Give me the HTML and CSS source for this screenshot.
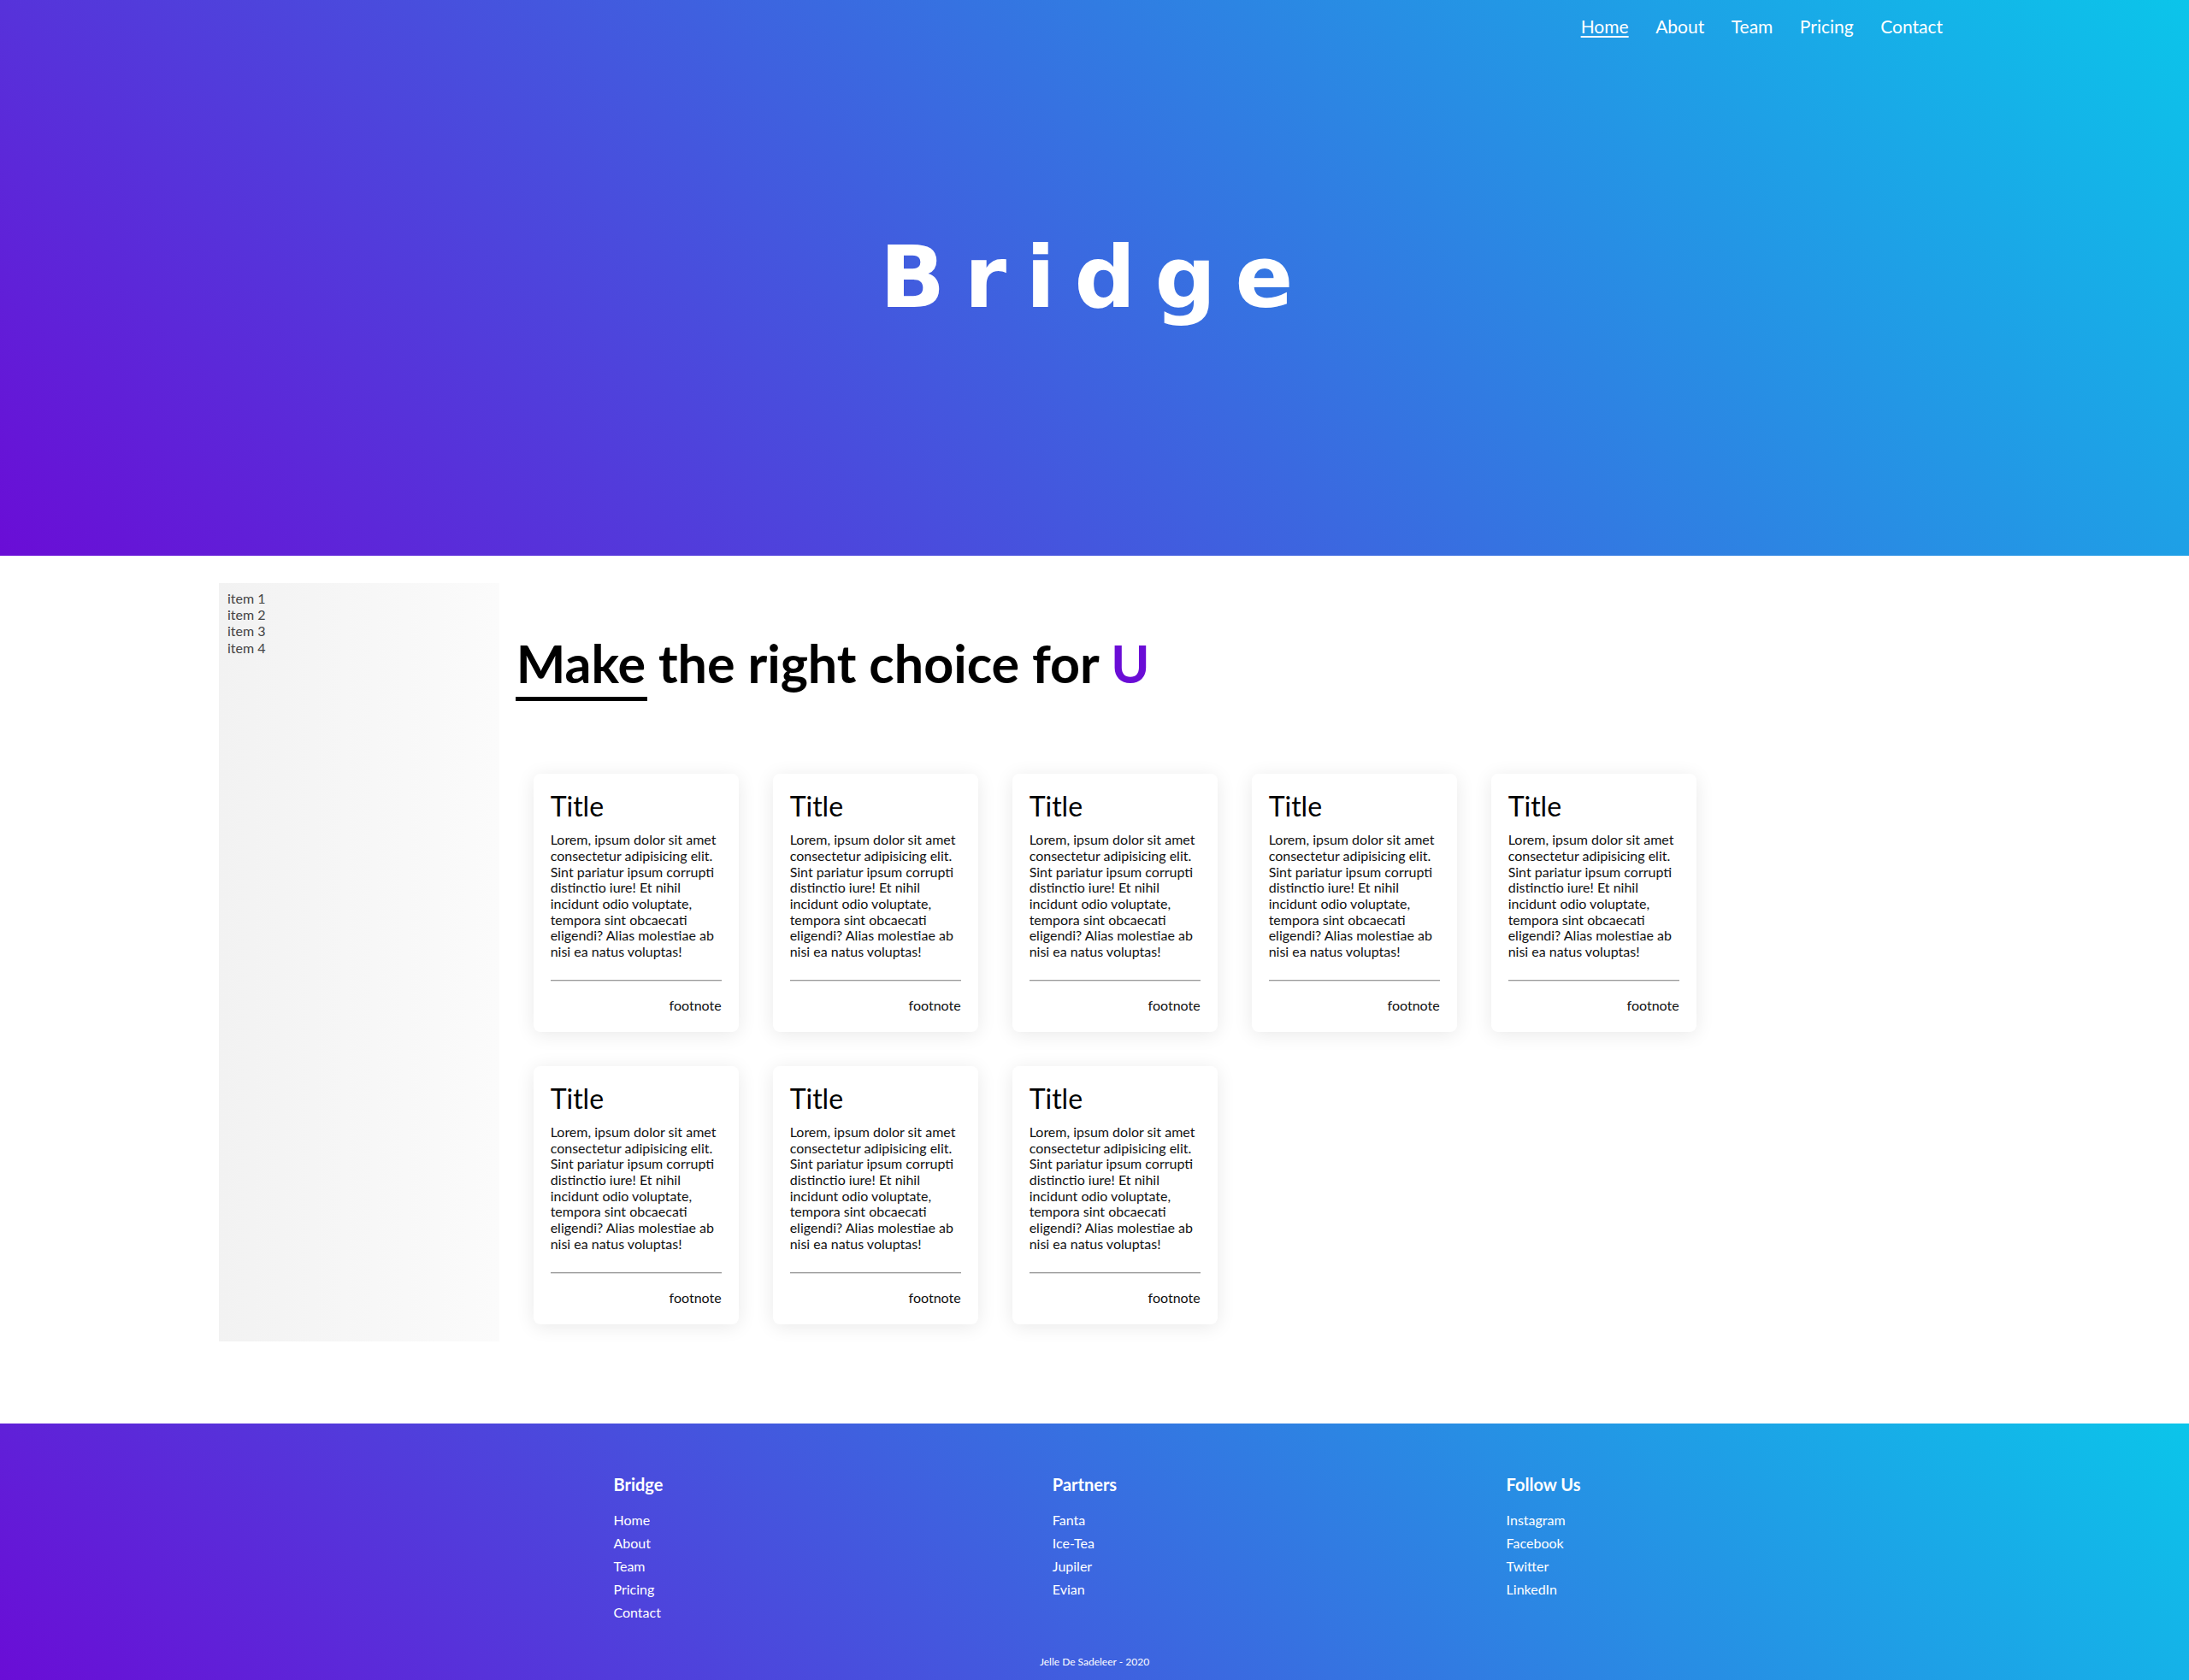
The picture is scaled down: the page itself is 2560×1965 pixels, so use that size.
FILE: index.html
```html
<!DOCTYPE html>
<html lang="en">
<head>
<meta charset="utf-8">
<title>Bridge</title>
<link rel="stylesheet" href="styles.css">
</head>
<body>
<header class="hero">
  <nav class="nav">
    <ul class="nav-list">
      <li><a class="nav-link is-active" href="#">Home</a></li>
      <li><a class="nav-link" href="#">About</a></li>
      <li><a class="nav-link" href="#">Team</a></li>
      <li><a class="nav-link" href="#">Pricing</a></li>
      <li><a class="nav-link" href="#">Contact</a></li>
    </ul>
  </nav>
  <div class="hero-body">
    <h1 class="hero-title">Bridge</h1>
  </div>
</header>

<div class="page">
  <aside class="sidebar">
    <ul class="side-list">
      <li>item 1</li>
      <li>item 2</li>
      <li>item 3</li>
      <li>item 4</li>
    </ul>
  </aside>
  <main class="main">
    <h2 class="headline"><span class="headline-mark">Make</span> the right choice for <span class="accent">U</span></h2>
    <div class="cards">
      <article class="card"><h3 class="card-title">Title</h3><p class="card-text">Lorem, ipsum dolor sit amet consectetur adipisicing elit. Sint pariatur ipsum corrupti distinctio iure! Et nihil incidunt odio voluptate, tempora sint obcaecati eligendi? Alias molestiae ab nisi ea natus voluptas!</p><hr class="card-rule"><p class="card-foot">footnote</p></article>
      <article class="card"><h3 class="card-title">Title</h3><p class="card-text">Lorem, ipsum dolor sit amet consectetur adipisicing elit. Sint pariatur ipsum corrupti distinctio iure! Et nihil incidunt odio voluptate, tempora sint obcaecati eligendi? Alias molestiae ab nisi ea natus voluptas!</p><hr class="card-rule"><p class="card-foot">footnote</p></article>
      <article class="card"><h3 class="card-title">Title</h3><p class="card-text">Lorem, ipsum dolor sit amet consectetur adipisicing elit. Sint pariatur ipsum corrupti distinctio iure! Et nihil incidunt odio voluptate, tempora sint obcaecati eligendi? Alias molestiae ab nisi ea natus voluptas!</p><hr class="card-rule"><p class="card-foot">footnote</p></article>
      <article class="card"><h3 class="card-title">Title</h3><p class="card-text">Lorem, ipsum dolor sit amet consectetur adipisicing elit. Sint pariatur ipsum corrupti distinctio iure! Et nihil incidunt odio voluptate, tempora sint obcaecati eligendi? Alias molestiae ab nisi ea natus voluptas!</p><hr class="card-rule"><p class="card-foot">footnote</p></article>
      <article class="card"><h3 class="card-title">Title</h3><p class="card-text">Lorem, ipsum dolor sit amet consectetur adipisicing elit. Sint pariatur ipsum corrupti distinctio iure! Et nihil incidunt odio voluptate, tempora sint obcaecati eligendi? Alias molestiae ab nisi ea natus voluptas!</p><hr class="card-rule"><p class="card-foot">footnote</p></article>
      <article class="card"><h3 class="card-title">Title</h3><p class="card-text">Lorem, ipsum dolor sit amet consectetur adipisicing elit. Sint pariatur ipsum corrupti distinctio iure! Et nihil incidunt odio voluptate, tempora sint obcaecati eligendi? Alias molestiae ab nisi ea natus voluptas!</p><hr class="card-rule"><p class="card-foot">footnote</p></article>
      <article class="card"><h3 class="card-title">Title</h3><p class="card-text">Lorem, ipsum dolor sit amet consectetur adipisicing elit. Sint pariatur ipsum corrupti distinctio iure! Et nihil incidunt odio voluptate, tempora sint obcaecati eligendi? Alias molestiae ab nisi ea natus voluptas!</p><hr class="card-rule"><p class="card-foot">footnote</p></article>
      <article class="card"><h3 class="card-title">Title</h3><p class="card-text">Lorem, ipsum dolor sit amet consectetur adipisicing elit. Sint pariatur ipsum corrupti distinctio iure! Et nihil incidunt odio voluptate, tempora sint obcaecati eligendi? Alias molestiae ab nisi ea natus voluptas!</p><hr class="card-rule"><p class="card-foot">footnote</p></article>
    </div>
  </main>
</div>

<footer class="footer">
  <div class="footer-cols">
    <div class="footer-col">
      <h4 class="footer-head">Bridge</h4>
      <ul class="footer-list">
        <li>Home</li>
        <li>About</li>
        <li>Team</li>
        <li>Pricing</li>
        <li>Contact</li>
      </ul>
    </div>
    <div class="footer-col">
      <h4 class="footer-head">Partners</h4>
      <ul class="footer-list">
        <li>Fanta</li>
        <li>Ice-Tea</li>
        <li>Jupiler</li>
        <li>Evian</li>
      </ul>
    </div>
    <div class="footer-col">
      <h4 class="footer-head">Follow Us</h4>
      <ul class="footer-list">
        <li>Instagram</li>
        <li>Facebook</li>
        <li>Twitter</li>
        <li>LinkedIn</li>
      </ul>
    </div>
  </div>
  <p class="copyright">Jelle De Sadeleer - 2020</p>
</footer>
</body>
</html>
```

FILE: styles.css
```css
* { box-sizing: border-box; }

body {
  margin: 0;
  font-family: Lato, "Open Sans", sans-serif;
  color: #000;
  background: #fff;
}

/* ---------- hero ---------- */
.hero {
  height: 650px;
  display: grid;
  background: linear-gradient(45deg, #6a0dd6 0%, #0bc5ea 100%);
  color: #fff;
}

.nav, .hero-body { grid-area: 1 / 1; }

.nav { align-self: start; }

.nav-list {
  list-style: none;
  margin: 0;
  padding: 18px 288px 0 0;
  display: flex;
  justify-content: flex-end;
  gap: 31.5px;
}

.nav-link {
  color: #fff;
  text-decoration: none;
  font-size: 21px;
  line-height: 1.2;
}

.nav-link.is-active { text-decoration: underline; text-underline-offset: 3px; }

.hero-body {
  align-self: center;
  text-align: center;
}

.hero-title {
  margin: 0;
  font-family: "DejaVu Sans", sans-serif;
  font-weight: 700;
  font-size: 100px;
  letter-spacing: 22.5px;
  padding-left: 4px;
  line-height: 1.164;
}

/* ---------- page ---------- */
.page {
  width: 80%;
  margin: 32px auto 96px;
  display: flex;
}

.sidebar {
  width: 16%;
  flex-shrink: 0;
  padding: 8px 10px;
  background: linear-gradient(to right, #f2f2f2, #fbfbfb);
  color: #444;
  font-size: 16px;
  line-height: 1.2;
}

.side-list { list-style: none; margin: 0; padding: 0; }

.main {
  flex: 1;
  padding-left: 20px;
}

.headline {
  margin: 57px 0 73px;
  font-size: 61px;
  font-weight: 700;
  line-height: 1.2;
}

.headline-mark { position: relative; }

.headline-mark::after {
  content: "";
  position: absolute;
  left: -1px;
  top: calc(100% + 3px);
  width: 154px;
  height: 5px;
  background: #000;
}

.accent { color: #6a0dd6; }

.cards {
  display: flex;
  flex-wrap: wrap;
  max-width: 1440px;
}

.card {
  width: 240px;
  margin: 20px;
  padding: 19px 20px 22px;
  border-radius: 8px;
  background: #fff;
  box-shadow: 0 3px 22px rgba(0, 0, 0, 0.09);
  color: #111;
}

.card-title {
  margin: 0 0 10.6px;
  font-size: 32px;
  font-weight: 400;
  line-height: 1.2;
  color: #000;
}

.card-text {
  margin: 0;
  font-size: 16px;
  line-height: 18.7px;
}

.card-rule {
  margin: 23px 0 18px;
  height: 0;
  border: 0;
  border-top: 1px solid #9a9a9a;
  border-bottom: 1px solid #dcdcdc;
}

.card-foot {
  margin: 0;
  text-align: right;
  font-size: 16px;
  line-height: 1.2;
}

/* ---------- footer ---------- */
.footer {
  background: linear-gradient(45deg, #6a0dd6 0%, #0bc5ea 100%);
  color: #fff;
  padding: 59px 0 15px;
}

.footer-cols {
  width: 80%;
  margin: 0 auto;
  display: flex;
  justify-content: space-evenly;
  padding-left: 6px;
}

.footer-head {
  margin: 0 0 16px;
  font-size: 20px;
  font-weight: 700;
  line-height: 24px;
}

.footer-list {
  list-style: none;
  margin: 0;
  padding: 0;
  font-size: 16px;
  line-height: 27px;
  min-height: 135px;
}

.copyright {
  margin: 38px 0 0;
  text-align: center;
  font-size: 12px;
  line-height: 1.2;
}
```
